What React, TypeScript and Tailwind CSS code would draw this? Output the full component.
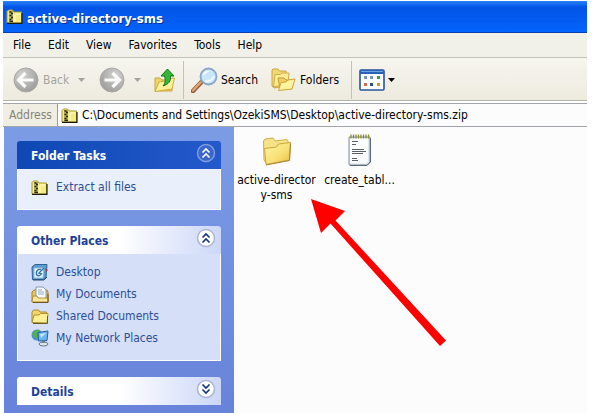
import React from "react";

const ZipIcon = ({ className }: { className: string }) => (
  <svg viewBox="0 0 17 15" className={className} aria-hidden="true">
    <path d="M1 2.5 2.5 1h4L8 3h7.5v11H1z" fill="#f6ec86" stroke="#a89a30" />
    <path d="M1 14.3h15V4" fill="none" stroke="#1d1c10" strokeWidth="1.2" />
    <path d="M9 5h5.5M9 6v7" stroke="#fffbd0" />
    <path d="M3 2h4v11.500H3z" fill="#b9ae62" />
    <path
      d="M3.500 3h2M5 4.500h2M3.500 6.500h2M5 8.500h2M3.500 10.500h2M3.500 12.500h3.500"
      stroke="#26230c"
      strokeWidth="1.300"
    />
  </svg>
);

const FolderIcon = ({ className }: { className: string }) => (
  <svg viewBox="0 0 30 29" className={className} aria-hidden="true">
    <defs>
      <linearGradient id="folderFace" x1="0" y1="0" x2="1" y2="1">
        <stop offset="0" stopColor="#fff5a6" />
        <stop offset="0.6" stopColor="#f8df74" />
        <stop offset="1" stopColor="#e6b93c" />
      </linearGradient>
    </defs>
    <path
      d="M1.500 4 3 2l8-1 2 3 12-1.500 1 1.500v5L4 26 2 23z"
      fill="#f7e387"
      stroke="#cfae48"
    />
    <path
      d="M4 27.500 2.500 11.500l12-1.500 2-3L28.500 5.500 27.500 23z"
      fill="url(#folderFace)"
      stroke="#cba63c"
    />
    <path d="M4 28 27.500 23.500 28.500 7" fill="none" stroke="#a98430" />
  </svg>
);

const NotepadIcon = ({ className }: { className: string }) => (
  <svg viewBox="0 0 25 33" className={className} aria-hidden="true">
    <path d="M2 4h21v25l-3 3H2z" fill="#dfe5ea" stroke="#8791a0" />
    <path d="M3 5h18v23l-2.500 2.500H3z" fill="#fbfcfd" />
    <path d="M23.500 5v24l-3.500 3.500H3" fill="none" stroke="#5d6674" />
    <path
      d="M4 1.500v4M6.500 1.500v4M9 1.500v4M11.500 1.500v4M14 1.500v4M16.500 1.500v4M19 1.500v4M21.500 1.500v4"
      stroke="#8a8a34"
      strokeWidth="1.300"
    />
    <path
      d="M5 8.500h6M5 11.500h4M5 16.500h12M5 18.500h14M5 20.500h11M5 25.500h5M5 27.500h6"
      stroke="#59606a"
    />
  </svg>
);

const RoundArrow = ({ flip }: { flip?: boolean }) => (
  <svg
    viewBox="0 0 26 26"
    className={flip ? "h-[26px] w-[26px] -scale-x-100" : "h-[26px] w-[26px]"}
    aria-hidden="true"
  >
    <defs>
      <radialGradient id="greyBall" cx="0.350" cy="0.300" r="0.800">
        <stop offset="0" stopColor="#d2d2d0" />
        <stop offset="1" stopColor="#999997" />
      </radialGradient>
    </defs>
    <circle cx="13" cy="13" r="12" fill="url(#greyBall)" stroke="#aaa9a4" />
    <path
      d="M12.500 6 5.500 13l7 7M6.500 13H20.500"
      fill="none"
      stroke="#fbfbf8"
      strokeWidth="3.200"
    />
  </svg>
);

const UpIcon = () => (
  <svg viewBox="0 0 22 25" className="h-[25px] w-[22px]" aria-hidden="true">
    <path d="M1 10h5l2 2h10v11H1z" fill="#f0d468" stroke="#c9a436" />
    <path d="M1 23.500 5 14l6-1 2-2 7.500-1-2.500 11z" fill="#fdf09a" stroke="#d0ac40" />
    <path
      d="M9 18c6-2 8-5 7.500-10H20L13.500 1 7 8h3.500c1 4 1 7-1.500 10z"
      fill="#35b535"
      stroke="#16771c"
    />
  </svg>
);

const SearchIcon = () => (
  <svg viewBox="0 0 27 26" className="h-[26px] w-[27px]" aria-hidden="true">
    <path d="M2 24 10 15.500" stroke="#8d5a38" strokeWidth="4.500" strokeLinecap="round" />
    <path d="M2 23.500 9.500 15.500" stroke="#e8a470" strokeWidth="2.500" strokeLinecap="round" />
    <circle cx="17.500" cy="9.500" r="8" fill="#c8e6fa" stroke="#8da5c4" strokeWidth="1.800" />
    <path d="M12 9c0-4 4-6 7-5-3 1-5 3-7 5z" fill="#fff" />
    <path d="M14 14c4 1 8-1 9-5" fill="none" stroke="#eef9ff" strokeWidth="2" />
  </svg>
);

const FoldersIcon = () => (
  <svg viewBox="0 0 25 24" className="h-6 w-[25px]" aria-hidden="true">
    <path d="M1 2 2 1h5l1.500 2H15v15L3 20 1 18z" fill="#f1d873" stroke="#c8a640" />
    <path d="M2.500 19 4 6.500h5l2-1.500h7l-1 11z" fill="#fbec92" stroke="#cfae48" />
    <path d="M7 10h6l2 2h6v9H9z" fill="#efd066" stroke="#c19b36" />
    <path d="M7.500 22.500 10 14.500l5-.500 2-2 7-1-3 10z" fill="#fff3a0" stroke="#cda73c" />
  </svg>
);

const ViewsIcon = () => (
  <svg viewBox="0 0 26 22" className="h-[22px] w-[26px]" aria-hidden="true">
    <rect x="1" y="1" width="24" height="20" rx="1" fill="#fbfcff" stroke="#28549c" strokeWidth="1.600" />
    <path d="M1 1h24v4H1z" fill="#2b62b8" />
    <path d="M2 2.500h22" stroke="#6da2e6" />
    <path d="M5 7h3v3H5zM11 7h3v3h-3z" fill="#7b93b8" />
    <path d="M18 7h3v3h-3z" fill="#3c9c48" />
    <path d="M5 14h3v3H5z" fill="#d9694a" />
    <path d="M11 14h3v3h-3z" fill="#274f9c" />
    <path d="M18 14h3v3h-3z" fill="#c69a2c" />
  </svg>
);

const Caret = ({ className }: { className: string }) => (
  <svg viewBox="0 0 7 4" className={className} aria-hidden="true">
    <path d="M0 0h7L3.500 4z" fill="currentColor" />
  </svg>
);

const DesktopIcon = () => (
  <svg viewBox="0 0 18 18" className="h-[18px] w-[18px]" aria-hidden="true">
    <path d="M1 4 4 1.500h12L15 14l-3 2.500H1.500z" fill="#5e9bd0" stroke="#2d6596" />
    <path d="M3 5h10l-1 10H3z" fill="#e9f5fc" stroke="#8bb8da" />
    <path d="M10 6.500C7 6 4.500 8 5.500 11.500c1.500 2 4 1.500 5-1L8 10l5-5" fill="none" stroke="#2f74ab" strokeWidth="1.400" />
    <path d="m14 5 3 2-2 2z" fill="#93432f" />
    <path d="M2 17h11l3-3" fill="none" stroke="#274b6a" />
  </svg>
);

const DocumentsIcon = () => (
  <svg viewBox="0 0 18 17" className="h-[17px] w-[18px]" aria-hidden="true">
    <path d="M1 6 3 4h13l1 2v10H1z" fill="#e7c65a" stroke="#a9812c" />
    <path d="M5 1h7l3 3v9H5z" fill="#f7fbff" stroke="#8698b0" />
    <path d="M7 4h4M7 6h6M7 8h6" stroke="#8fa9c9" />
    <path d="M1 16 2 10h4l1 2h10v4z" fill="#f8e79b" stroke="#b68f37" />
    <path d="M2 16.500h15V8" fill="none" stroke="#6f5621" />
  </svg>
);

const SharedIcon = () => (
  <svg viewBox="0 0 18 15" className="h-[15px] w-[18px]" aria-hidden="true">
    <path d="M1 3 2.500 1h5L9 3h6.500v10H1z" fill="#f2d669" stroke="#a98a2e" />
    <path d="M1 13.500 3 6h5l1.500-1.500H17L16 14z" fill="#fdef94" stroke="#b3912f" />
    <path d="M2 14.500h14.500V7" fill="none" stroke="#6b5a24" />
  </svg>
);

const NetworkIcon = () => (
  <svg viewBox="0 0 18 18" className="h-[18px] w-[18px]" aria-hidden="true">
    <circle cx="6" cy="6" r="5.500" fill="#4593d2" />
    <path d="M1 5c2-4 5-5 8-4L6 5l1 5-3-1z" fill="#55b04b" />
    <path d="M7 3.500 17 2l-1 9.500-8.500.500z" fill="#69b7f2" stroke="#2b5f9e" />
    <path d="m9 5 6-1-5 5z" fill="#c1e6ff" />
    <ellipse cx="12.500" cy="15" rx="4.500" ry="2" fill="#dde3ec" stroke="#64748c" />
    <path d="M11 12h3v2h-3z" fill="#74839a" />
  </svg>
);

const menus = ["File", "Edit", "View", "Favorites", "Tools", "Help"];

const places = [
  { name: "Desktop", icon: <DesktopIcon /> },
  { name: "My Documents", icon: <DocumentsIcon /> },
  { name: "Shared Documents", icon: <SharedIcon /> },
  { name: "My Network Places", icon: <NetworkIcon /> },
];

type PanelProps = {
  title: string;
  primary?: boolean;
  closed?: boolean;
  children?: React.ReactNode;
};

const Panel = ({ title, primary, closed, children }: PanelProps) => (
  <section>
    <h2>
      <button
        aria-expanded={!closed}
        className={
          primary
            ? "flex h-7 w-full items-center justify-between rounded-t-[3px] bg-linear-to-r from-[#0d48b4] to-[#2459cc] pr-[5px] pl-[14px] font-bold text-white"
            : "flex h-7 w-full items-center justify-between rounded-t-[3px] bg-linear-to-r from-white from-50% to-[#ccd7f8] pr-[5px] pl-[14px] font-bold text-[#1b4399]"
        }
      >
        <span className="pt-0.5">{title}</span>
        <svg viewBox="0 0 20 20" className="mb-1 h-5 w-5" aria-hidden="true">
          <circle
            cx="10"
            cy="10"
            r="8.500"
            fill={primary ? "#3a67c9" : "#ffffff"}
            stroke={primary ? "#7d9ce2" : "#adb4cf"}
            strokeWidth="1.500"
          />
          <path
            d={closed ? "m6.500 5.500 3.500 3.500 3.500-3.500M6.500 10.500l3.500 3.500 3.500-3.500" : "M6.500 9.500 10 6l3.500 3.500M6.500 14.500 10 11l3.500 3.500"}
            fill="none"
            stroke={primary ? "#ffffff" : "#173579"}
            strokeWidth="1.700"
          />
        </svg>
      </button>
    </h2>
    {children}
  </section>
);

const App = () => {
  return (
    <div className="flex min-h-screen flex-col bg-white pt-px pr-[5px] pl-[3px] font-['DejaVu_Sans_Condensed','Noto_Sans',sans-serif] text-xs text-black">
      <header className="flex h-8 items-center gap-1 border-b border-[#0a3db0] bg-linear-to-b from-[#2a83fa] via-[#0353e6] via-20% to-[#0363fb] pl-[3px]">
        <ZipIcon className="h-[15px] w-[17px]" />
        <h1 className="pt-1 text-[13px] font-bold text-white [text-shadow:1px_1px_#0a2f8c]">
          active-directory-sms
        </h1>
      </header>

      <nav className="flex h-[25px] items-center gap-[17px] border-b border-[#c3c3bb] bg-[#f2f1e9] pl-[10px]">
        {menus.map((menu) => (
          <button key={menu}>{menu}</button>
        ))}
      </nav>

      <div className="flex h-[43px] items-center border-b border-[#b5b4ad] bg-linear-to-b from-[#f6f5ef] to-[#edebde] pt-0.5 pl-[10px]">
        <button disabled className="flex items-center gap-1 text-[#a5a49c]">
          <RoundArrow />
          <span className="w-[31px] text-left">Back</span>
          <Caret className="h-1 w-[7px]" />
        </button>
        <button
          disabled
          aria-label="Forward"
          className="ml-[14px] flex items-center gap-[9px] text-[#a5a49c]"
        >
          <RoundArrow flip />
          <Caret className="h-1 w-[7px]" />
        </button>
        <button aria-label="Up" className="ml-[13px]">
          <UpIcon />
        </button>
        <span className="mx-[7px] h-[38px] w-px bg-[#c4c2b6]" />
        <button className="flex items-center gap-[3px]">
          <SearchIcon />
          Search
        </button>
        <button className="ml-[13px] flex items-center gap-1">
          <FoldersIcon />
          Folders
        </button>
        <span className="mr-[7px] ml-3 h-[38px] w-px bg-[#c4c2b6]" />
        <button aria-label="Views" className="flex items-center gap-[3px]">
          <ViewsIcon />
          <Caret className="h-1 w-[7px]" />
        </button>
      </div>

      <div className="mt-0.5 flex h-6 border-t border-b border-[#a1a4a9] bg-[#f0eee2]">
        <label
          htmlFor="address"
          className="w-[54px] self-center pl-[6px] text-[#85847d]"
        >
          Address
        </label>
        <div className="flex flex-1 items-center gap-1 border-l border-[#8d9cab] bg-[#fcfcfc] pl-[3px]">
          <ZipIcon className="h-[15px] w-[17px]" />
          <input
            id="address"
            className="min-w-0 flex-1 outline-none"
            defaultValue="C:\Documents and Settings\OzekiSMS\Desktop\active-directory-sms.zip"
          />
        </div>
      </div>

      <div className="flex flex-1">
        <aside className="ml-px flex w-[230px] flex-col gap-4 bg-linear-to-b from-[#7c9ce6] to-[#6883da] pt-[14px] pr-[13px] pb-2 pl-[13px] text-[#2c4f9b]">
          <Panel title="Folder Tasks" primary>
            <div className="border border-t-0 border-white bg-[#e9effb] px-[13px] pt-[10px] pb-[14px]">
              <a href="#extract" className="flex items-center gap-2">
                <ZipIcon className="h-[15px] w-[17px]" />
                Extract all files
              </a>
            </div>
          </Panel>
          <Panel title="Other Places">
            <ul className="border border-t-0 border-white bg-[#d5dff7] px-[13px] pt-[7px] pb-[11px]">
              {places.map((place) => (
                <li key={place.name}>
                  <a href="#place" className="flex h-[22px] items-center gap-[7px]">
                    {place.icon}
                    {place.name}
                  </a>
                </li>
              ))}
            </ul>
          </Panel>
          <Panel title="Details" closed />
        </aside>

        <main className="relative flex flex-1 items-start bg-[#fcfcfc] pt-[5px] pl-px text-center leading-[15px]">
          <button className="flex w-[83px] flex-col items-center gap-[7px]">
            <FolderIcon className="mt-[5px] h-[29px] w-[30px]" />
            <span>
              active-director
              <br />
              y-sms
            </span>
          </button>
          <button className="flex w-[83px] flex-col items-center gap-[7px]">
            <NotepadIcon className="mt-px h-[33px] w-[25px]" />
            <span>create_tabl...</span>
          </button>
          <svg
            viewBox="0 0 136 148"
            className="absolute top-[71px] left-[76px] h-[148px] w-[136px]"
            aria-hidden="true"
          >
            <path d="M1 1 35 13 25.500 22.500 136 142.500 130 148 20.500 25.500 11 35z" fill="#ff0000" />
          </svg>
        </main>
      </div>
    </div>
  );
};

export default App;
